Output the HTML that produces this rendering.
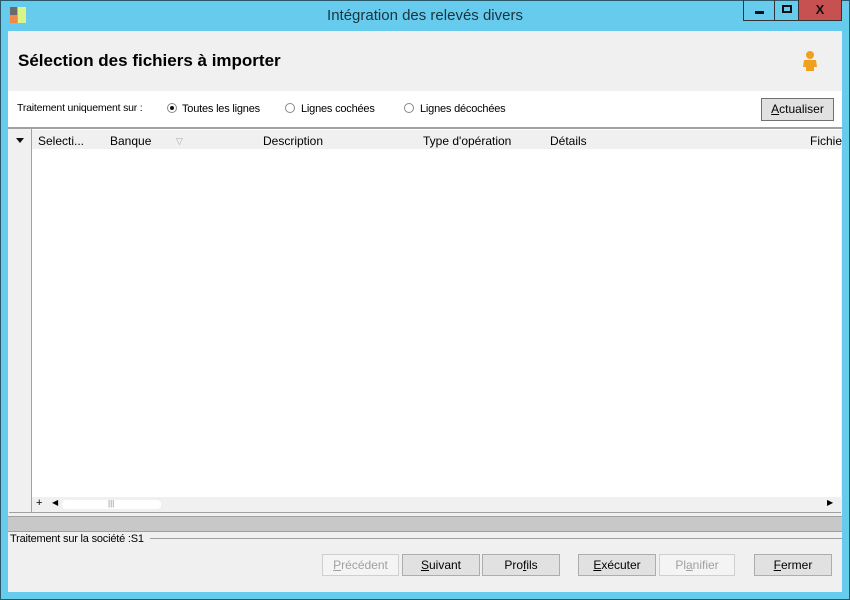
<!DOCTYPE html>
<html><head><meta charset="utf-8"><style>
*{margin:0;padding:0;box-sizing:border-box}
body{width:850px;height:600px;background:#66cbec;position:relative;overflow:hidden;font-family:"Liberation Sans",sans-serif;font-size:12px;color:#000}
.a{position:absolute}
.btn{position:absolute;top:554px;height:22px;background:#e1e1e1;border:1px solid #adadad;text-align:center;line-height:20px;font-size:12px}
.dis{color:#a0a0a0;background:#f4f4f4;border-color:#cfcfcf}
.hd{position:absolute;top:134px;font-size:12px}
.rad{position:absolute;top:103px;width:10px;height:10px;border-radius:50%;border:1px solid #888;background:#fff}
.rl{position:absolute;top:103px;font-size:11px;letter-spacing:-0.2px}
</style></head><body>
<div class="a" style="left:0;top:0;width:850px;height:600px;border:1px solid #2a5a6a"></div>
<div class="a" style="left:10px;top:7px;width:7px;height:8px;background:#6a6a6a"></div>
<div class="a" style="left:10px;top:15px;width:7px;height:8px;background:#f08a4b"></div>
<div class="a" style="left:18px;top:7px;width:8px;height:16px;background:#d9f58a"></div>
<div class="a" style="left:0;top:7px;width:850px;text-align:center;font-size:15px;color:#1a3440">Intégration des relevés divers</div>
<div class="a" style="left:743px;top:0;width:32px;height:21px;border:1px solid #333;border-top:none"><div class="a" style="left:11px;top:11px;width:9px;height:3px;background:#111"></div></div>
<div class="a" style="left:774px;top:0;width:25px;height:21px;border:1px solid #333;border-top:none"><div class="a" style="left:7px;top:5px;width:10px;height:8px;border:2px solid #111"></div></div>
<div class="a" style="left:798px;top:0;width:44px;height:21px;background:#c75050;border:1px solid #333;border-top:none;text-align:center;font-weight:bold;font-size:13px;line-height:20px;color:#111">X</div>
<div class="a" style="left:8px;top:31px;width:834px;height:561px;background:#f0f0f0"></div>
<div class="a" style="left:18px;top:51px;font-size:17px;font-weight:bold">Sélection des fichiers à importer</div>
<svg class="a" style="left:800px;top:50px" width="20" height="22"><circle cx="10" cy="5" r="4" fill="#f0a020"/><path d="M4 10h12l1 7h-3v4h-8v-4h-3z" fill="#f0a020"/></svg>
<div class="a" style="left:8px;top:91px;width:834px;height:37px;background:#fff"></div>
<div class="a" style="left:17px;top:102px;font-size:10.5px;letter-spacing:-0.2px">Traitement uniquement sur :</div>
<div class="rad" style="left:167px"><div class="a" style="left:2px;top:2px;width:4px;height:4px;border-radius:50%;background:#111"></div></div>
<div class="rl" style="left:182px">Toutes les lignes</div>
<div class="rad" style="left:285px"></div>
<div class="rl" style="left:301px">Lignes cochées</div>
<div class="rad" style="left:404px"></div>
<div class="rl" style="left:420px">Lignes décochées</div>
<div class="a" style="left:761px;top:98px;width:73px;height:23px;background:#e1e1e1;border:1px solid #707070;text-align:center;line-height:21px"><u>A</u>ctualiser</div>
<div class="a" style="left:8px;top:127px;width:834px;height:2px;background:#a0a0a0"></div>
<div class="a" style="left:9px;top:129px;width:832px;height:384px;background:#fff;border-bottom:1px solid #a0a0a0"></div>
<div class="a" style="left:9px;top:129px;width:23px;height:383px;background:#f0f0f0;border-right:1px solid #a0a0a0"></div>
<div class="a" style="left:32px;top:130px;width:809px;height:19px;background:#f0f0f0"></div>
<div class="a" style="left:16px;top:138px;width:0;height:0;border-left:4px solid transparent;border-right:4px solid transparent;border-top:5px solid #111"></div>
<div class="hd" style="left:38px">Selecti...</div>
<div class="hd" style="left:110px">Banque</div>
<div class="a" style="left:176px;top:136px;color:#aaa;font-size:9px">▽</div>
<div class="hd" style="left:263px">Description</div>
<div class="hd" style="left:423px">Type d'opération</div>
<div class="hd" style="left:550px">Détails</div>
<div class="hd" style="left:810px">Fichie</div>
<div class="a" style="left:32px;top:497px;width:809px;height:15px;background:#f0f0f0"></div>
<div class="a" style="left:36px;top:497px;font-size:11px">+</div>
<div class="a" style="left:52px;top:498px;font-size:8px">◀</div>
<div class="a" style="left:62px;top:500px;width:99px;height:9px;background:#fff;border-radius:4px"></div>
<div class="a" style="left:108px;top:499px;font-size:8px;color:#888">|||</div>
<div class="a" style="left:827px;top:498px;font-size:8px">▶</div>
<div class="a" style="left:8px;top:516px;width:834px;height:16px;background:#c8c8c8;border-top:1px solid #a0a0a0;border-bottom:1px solid #a0a0a0"></div>
<div class="a" style="left:150px;top:538px;width:692px;height:1px;background:#a0a0a0"></div>
<div class="a" style="left:10px;top:533px;font-size:11px;letter-spacing:-0.2px">Traitement sur la société :S1</div>
<div class="btn dis" style="left:322px;width:77px"><u>P</u>récédent</div>
<div class="btn" style="left:402px;width:78px"><u>S</u>uivant</div>
<div class="btn" style="left:482px;width:78px">Pro<u>f</u>ils</div>
<div class="btn" style="left:578px;width:78px"><u>E</u>xécuter</div>
<div class="btn dis" style="left:659px;width:76px">Pl<u>a</u>nifier</div>
<div class="btn" style="left:754px;width:78px"><u>F</u>ermer</div>
</body></html>
